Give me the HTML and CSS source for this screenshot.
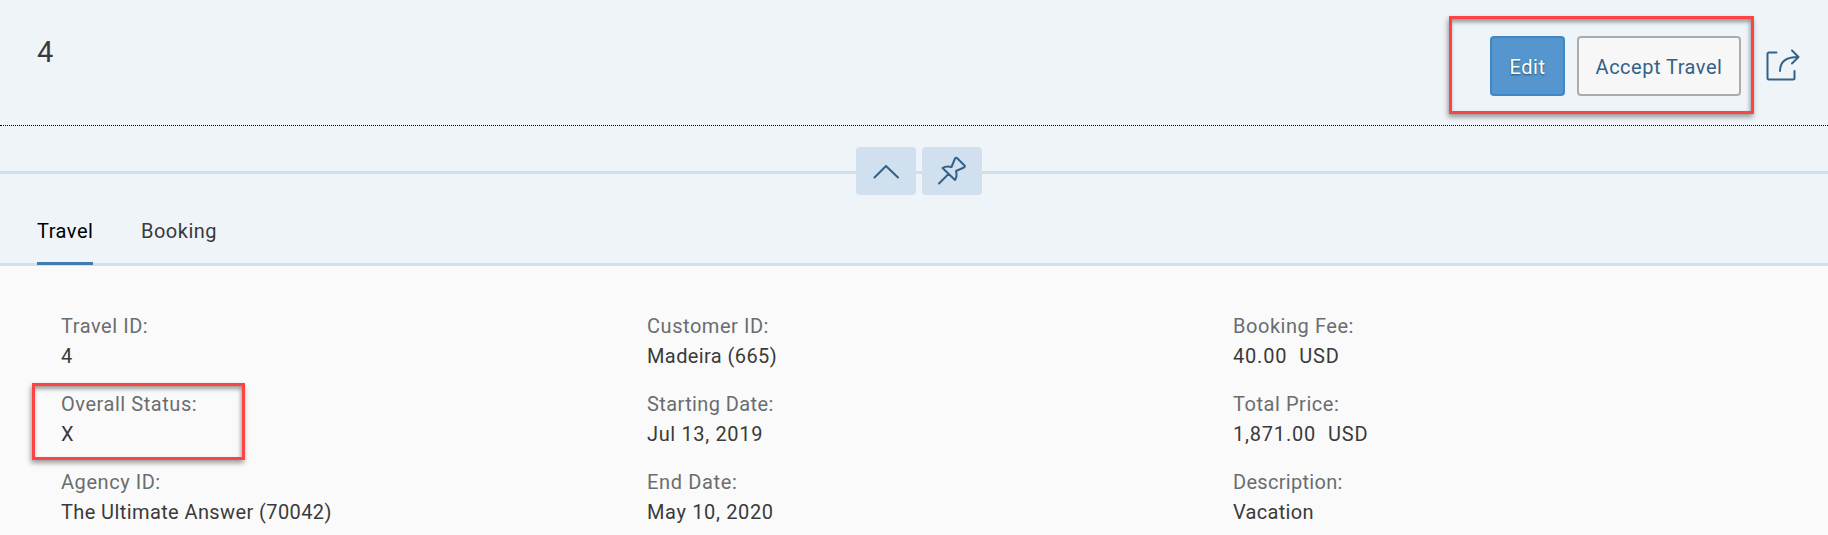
FILE: index.html
```html
<!DOCTYPE html>
<html lang="en">
<head>
<meta charset="utf-8">
<title>Travel 4</title>
<link rel="stylesheet" href="styles.css">
</head>
<body>
<header class="page-header">
  <h1 class="title">4</h1>
  <div class="actions">
    <button class="btn btn-primary">Edit</button>
    <button class="btn btn-default">Accept Travel</button>
    <svg class="share" width="36" height="34" viewBox="0 0 36 34"><path d="M11.500 3.500H4Q2.500 3.500 2.500 5V29Q2.500 30.500 4 30.500H28Q29.500 30.500 29.500 29V22M15 22C15 13 20 8 33 8M27 1.500L33.500 8L27 14.500"/></svg>
  </div>
  <div class="highlight highlight-actions"></div>
</header>
<div class="header-toggle">
  <button class="toggle"><svg width="60" height="48" viewBox="0 0 60 48"><path d="M18.500 30.500L30 19L42 30.500"/></svg></button>
  <button class="toggle"><svg width="60" height="48" viewBox="0 0 60 48"><path d="M17 36.500L26.500 27M20.500 21Q24.500 18.500 29.500 20L33 11.500Q34 10 35.500 11.500L42.500 18.500Q43.500 19.500 42 20.500L34 24Q35.500 29 33 33Z"/></svg></button>
</div>
<nav class="tabs">
  <a class="tab tab-active">Travel</a>
  <a class="tab">Booking</a>
</nav>
<main class="form">
  <dl class="column">
    <dt>Travel ID:</dt><dd>4</dd>
    <dt>Overall Status:</dt><dd>X</dd>
    <dt>Agency ID:</dt><dd class="text">The Ultimate Answer (70042)</dd>
  </dl>
  <dl class="column">
    <dt>Customer ID:</dt><dd class="text">Madeira (665)</dd>
    <dt class="text">Starting Date:</dt><dd class="date">Jul 13, 2019</dd>
    <dt class="date">End Date:</dt><dd class="date">May 10, 2020</dd>
  </dl>
  <dl class="column">
    <dt>Booking Fee:</dt><dd class="money"><span>40.00</span><span>USD</span></dd>
    <dt>Total Price:</dt><dd class="money"><span>1,871.00</span><span>USD</span></dd>
    <dt class="tight">Description:</dt><dd class="tight">Vacation</dd>
  </dl>
  <div class="highlight highlight-status"></div>
</main>
</body>
</html>
```

FILE: styles.css
```css
* { box-sizing: border-box; }
body { margin: 0; height: 535px; overflow: hidden; background: #fafafa; color: #3a3a3a; font: 20px/30px Roboto, "Noto Sans", sans-serif; letter-spacing: .5px; }
.page-header { position: relative; display: flex; justify-content: space-between; height: 126px; padding: 36px 27px 0 37px; background: #eff4f8; border-bottom: 1px dotted #000; }
.title { margin: 0; padding-top: 1px; font-size: 29px; line-height: 31px; font-weight: 400; letter-spacing: 0; }
.actions { display: flex; gap: 12px; }
.btn { height: 60px; padding: 2px 0 0; border: 2px solid; border-radius: 4px; font: inherit; letter-spacing: inherit; }
.btn-primary { width: 75px; background: #5496cd; border-color: #3f88c8; color: #fff; text-shadow: 0 1px 2px rgba(0,0,0,.5); }
.btn-default { width: 164px; background: #f7f7f7; border-color: #ababab; color: #346187; }
.share { margin: 13px 0 0 12px; }
svg { display: block; fill: none; stroke: #346187; stroke-width: 2; stroke-linecap: round; stroke-linejoin: round; }
.header-toggle { display: flex; justify-content: center; gap: 6px; height: 69px; padding: 21px 0 0 10px; background: linear-gradient(#d1e0ee, #d1e0ee) 0 45px / 100% 3px no-repeat #eff4f8; }
.toggle { width: 60px; height: 48px; padding: 0; border: 0; border-radius: 4px; background: #d1e0ee; }
.tabs { display: flex; gap: 48px; height: 71px; padding: 21px 37px 0; background: #eff4f8; border-bottom: 3px solid #d1e0ee; }
.tab { height: 49px; }
.tab-active { width: 56px; color: #000; border-bottom: 3px solid #427cac; }
.form { position: relative; display: flex; padding: 45px 61px 0; }
.column { width: 586px; flex: none; margin: 0; }
dt { color: #6a6d70; letter-spacing: .55px; }
dd { margin: 0 0 18px; }
.text { letter-spacing: .4px; }
.date { letter-spacing: .65px; }
.tight { letter-spacing: .3px; }
.money { display: flex; gap: 12px; letter-spacing: .8px; }
.highlight { position: absolute; border: 3px solid #fd4343; box-shadow: -1px 3px 5px rgba(0,0,0,.38), inset -1px 3px 4px rgba(0,0,0,.38); }
.highlight-actions { left: 1449px; top: 16px; width: 305px; height: 98px; }
.highlight-status { left: 32px; top: 117px; width: 213px; height: 77px; }
```
